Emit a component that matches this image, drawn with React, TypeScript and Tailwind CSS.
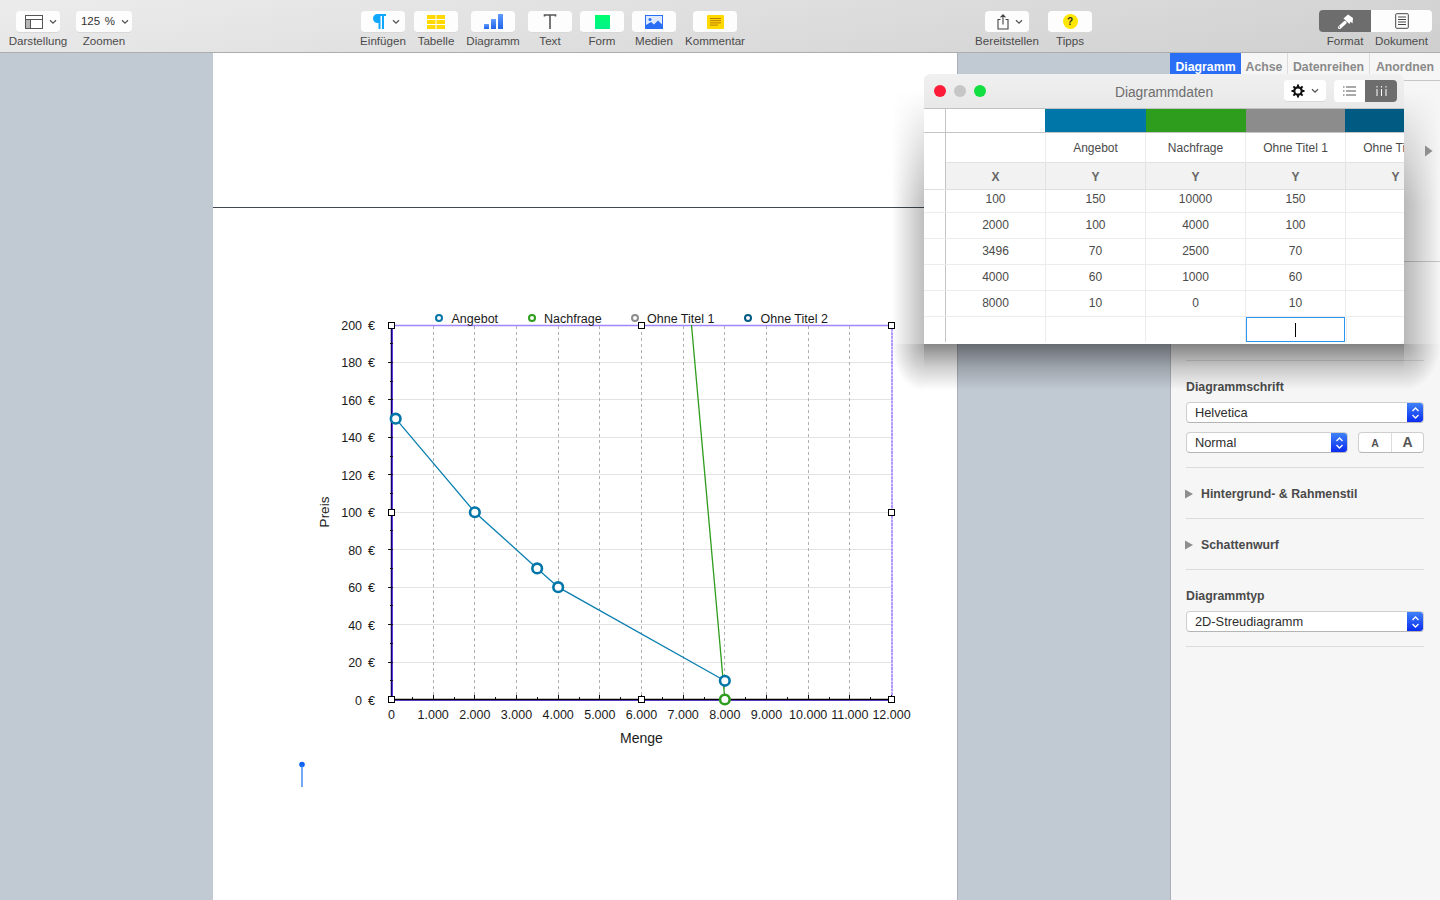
import type { ReactNode } from "react";

const FONT = "font-['Liberation_Sans',Arial,sans-serif]";

const Y_TICKS = [0, 20, 40, 60, 80, 100, 120, 140, 160, 180, 200];
const X_TICKS = [0, 1, 2, 3, 4, 5, 6, 7, 8, 9, 10, 11, 12];

const xAt = (v: number) => 391.5 + (v / 12000) * 500;
const yAt = (v: number) => 699.5 - (v / 200) * 374.5;
// keeps thin lines on whole pixels
const crisp = (n: number) => Math.floor(n) + 0.5;

const ANGEBOT: [number, number][] = [
  [100, 150],
  [2000, 100],
  [3496, 70],
  [4000, 60],
  [8000, 10],
];

const HANDLES: [number, number][] = [
  [391.5, 325.5],
  [641.5, 325.5],
  [891.5, 325.5],
  [391.5, 512.5],
  [891.5, 512.5],
  [391.5, 699.5],
  [641.5, 699.5],
  [891.5, 699.5],
];

const LEGEND = [
  { label: "Angebot", cx: 439, tx: 451.5, color: "#0076a8" },
  { label: "Nachfrage", cx: 532, tx: 544, color: "#2e9c1c" },
  { label: "Ohne Titel 1", cx: 635, tx: 647, color: "#8c8c8c" },
  { label: "Ohne Titel 2", cx: 748, tx: 760.5, color: "#005a82" },
];

const ROWS = [
  ["100", "150", "10000", "150"],
  ["2000", "100", "4000", "100"],
  ["3496", "70", "2500", "70"],
  ["4000", "60", "1000", "60"],
  ["8000", "10", "0", "10"],
];

function Chevron() {
  return (
    <svg width="8" height="6" viewBox="0 0 8 6" className="shrink-0">
      <path d="M1 1.2 4 4.2 7 1.2" fill="none" stroke="#555" strokeWidth="1.3" />
    </svg>
  );
}

function ToolItem({
  label,
  width,
  children,
}: {
  label: string;
  width: string;
  children: ReactNode;
}) {
  return (
    <div className={`flex shrink-0 flex-col items-center ${width}`}>
      {children}
      <span className="mt-[1px] text-[11.6px] leading-[14px] whitespace-nowrap text-[#4b4b4b]">{label}</span>
    </div>
  );
}

function ToolButton({ children, width = "w-[44px]", className = "" }: { children: ReactNode; width?: string; className?: string }) {
  return (
    <div
      className={`flex h-[22px] items-center justify-center gap-[6px] rounded-[4px] border-b border-[#d8d8d8] bg-[#fdfdfd] ${width} ${className}`}
    >
      {children}
    </div>
  );
}

function Toolbar() {
  return (
    <header className="flex h-[53px] shrink-0 border-b border-[#adadad] bg-[linear-gradient(170deg,#ececec,#cfcfcf)] pt-[11px]">
      <div className="ml-[8px] flex gap-[6px]">
        <ToolItem label="Darstellung" width="w-[60px]">
          <ToolButton className="pl-[6px]">
            <svg width="18" height="14" viewBox="0 0 18 14">
              <rect x="0.5" y="0.5" width="17" height="13" fill="#fff" stroke="#555" />
              <rect x="1" y="5" width="4.5" height="8" fill="#b5b5b5" />
              <path d="M0.5 4.5h17M5.5 4.5v9" stroke="#555" fill="none" />
            </svg>
            <Chevron />
          </ToolButton>
        </ToolItem>
        <ToolItem label="Zoomen" width="w-[60px]">
          <ToolButton width="w-[56px]" className="pl-[2px]">
            <span className="text-[11.5px] [word-spacing:1.5px] text-[#333]">125 %</span>
            <Chevron />
          </ToolButton>
        </ToolItem>
      </div>

      <div className="ml-[226px] flex gap-[7px]">
        <ToolItem label="Einfügen" width="w-[46px]">
          <ToolButton className="pl-[6px]">
            <svg width="14" height="15" viewBox="0 0 14 15">
              <path d="M5.500 0H14V2H12V15H10V2H8.500V15H6.500V9H5.500A4.500 4.500 0 0 1 5.500 0Z" fill="#10a8ff" />
            </svg>
            <Chevron />
          </ToolButton>
        </ToolItem>
        <ToolItem label="Tabelle" width="w-[46px]">
          <ToolButton>
            <svg width="18" height="14" viewBox="0 0 18 14">
              <rect width="18" height="14" fill="#ffd900" />
              <path d="M0 4.500h18M0 9.500h18M9 0v14" stroke="#fff" strokeWidth="1" />
            </svg>
          </ToolButton>
        </ToolItem>
        <ToolItem label="Diagramm" width="w-[54px]">
          <ToolButton>
            <svg width="19" height="15" viewBox="0 0 19 15">
              <defs>
                <linearGradient id="barFill" x1="0" y1="0" x2="0" y2="1">
                  <stop offset="0" stopColor="#5f9bff" />
                  <stop offset="1" stopColor="#1f62e8" />
                </linearGradient>
              </defs>
              <rect x="0" y="10" width="5" height="5" rx="0.6" fill="url(#barFill)" />
              <rect x="7" y="5" width="5" height="10" rx="0.6" fill="url(#barFill)" />
              <rect x="14" y="0" width="5" height="15" rx="0.6" fill="url(#barFill)" />
            </svg>
          </ToolButton>
        </ToolItem>
        <div className="ml-[1px] flex gap-[8px]">
          <ToolItem label="Text" width="w-[44px]">
            <ToolButton>
              <svg width="14" height="15" viewBox="0 0 14 15">
                <path d="M1.500 2.500V1h11v1.500M7 1v14" fill="none" stroke="#555" strokeWidth="1.600" />
              </svg>
            </ToolButton>
          </ToolItem>
          <ToolItem label="Form" width="w-[44px]">
            <ToolButton>
              <span className="h-[14px] w-[15px] bg-[linear-gradient(#00ff6e,#00f08a)]" />
            </ToolButton>
          </ToolItem>
          <ToolItem label="Medien" width="w-[44px]">
            <ToolButton>
              <svg width="18" height="14" viewBox="0 0 18 14">
                <rect x="0.500" y="0.500" width="17" height="13" fill="#dfeaff" stroke="#2a6ef5" />
                <circle cx="5" cy="4.500" r="1.500" fill="#2a6ef5" />
                <path d="M1 13V10L6 7 9 9.500 13 5.500 17 9.500V13Z" fill="#2a6ef5" />
              </svg>
            </ToolButton>
          </ToolItem>
          <ToolItem label="Kommentar" width="w-[62px]">
            <ToolButton>
              <svg width="17" height="14" viewBox="0 0 17 14">
                <rect width="17" height="14" rx="1" fill="#ffd900" />
                <path d="M3 3.500h11M3 5.700h11M3 7.900h11M3 10.100h8" stroke="#b5720a" strokeWidth="0.900" />
              </svg>
            </ToolButton>
          </ToolItem>
        </div>
      </div>

      <div className="ml-[228px] flex gap-[8px]">
        <ToolItem label="Bereitstellen" width="w-[66px]">
          <ToolButton className="pl-[6px]">
            <svg width="12" height="16" viewBox="0 0 12 16">
              <path
                d="M3.500 5.500H1V15H11V5.500H8.500M6 10.500V1M3.500 3.300 6 0.800 8.500 3.300"
                fill="none"
                stroke="#444"
                strokeWidth="1.100"
              />
            </svg>
            <Chevron />
          </ToolButton>
        </ToolItem>
        <ToolItem label="Tipps" width="w-[44px]">
          <ToolButton>
            <span className="flex h-[15px] w-[15px] items-center justify-center rounded-full bg-[#ffe600] text-[10px] font-bold text-[#333]">
              ?
            </span>
          </ToolButton>
        </ToolItem>
      </div>

      <div className="-mt-[1px] ml-auto mr-[8px] flex w-[113px] flex-col">
        <div className="flex h-[22px] overflow-hidden rounded-[4px]">
          <div className="flex w-[52px] items-center justify-center bg-[#6d6d6d]">
            <svg width="17" height="15" viewBox="0 0 17 15">
              <path d="M6.500 4.500 11 0.500 16 4 15.500 9.500 13.500 7.500 12.500 10 Z" fill="#fff" />
              <path d="M8 8.500 2.500 13.500" stroke="#fff" strokeWidth="3.200" strokeLinecap="round" />
              <circle cx="2.300" cy="13" r="0.700" fill="#6d6d6d" />
            </svg>
          </div>
          <div className="flex flex-1 items-center justify-center bg-[#fdfdfd]">
            <svg width="14" height="16" viewBox="0 0 14 16">
              <rect x="0.700" y="0.700" width="12.600" height="14.600" rx="1" fill="#fff" stroke="#444" />
              <path d="M3 4h8M3 6.500h8M3 9h8M3 11.500h8" stroke="#444" />
            </svg>
          </div>
        </div>
        <div className="mt-[2px] flex">
          <span className="w-[52px] text-center text-[11.6px] leading-[14px] text-[#4b4b4b]">Format</span>
          <span className="w-[61px] text-center text-[11.6px] leading-[14px] text-[#4b4b4b]">Dokument</span>
        </div>
      </div>
    </header>
  );
}

function Chart() {
  return (
    <svg
      width="744"
      height="639"
      viewBox="213 208 744 639"
      className="block font-['Liberation_Sans',Arial,sans-serif]"
    >
      {Y_TICKS.slice(1, -1).map((v) => (
        <line key={v} x1="392" x2="891" y1={crisp(yAt(v))} y2={crisp(yAt(v))} stroke="#e3e3e3" />
      ))}
      {X_TICKS.slice(1, -1).map((v) => (
        <line
          key={v}
          x1={crisp(xAt(v * 1000))}
          x2={crisp(xAt(v * 1000))}
          y1="326"
          y2="699"
          stroke="#b0b0b0"
          strokeDasharray="3 3"
        />
      ))}
      <line x1="392" x2="892" y1="325.500" y2="325.500" stroke="#a184ff" strokeWidth="1.300" />
      <line x1="892" x2="892" y1="325" y2="700" stroke="#9a78ff" strokeWidth="1.500" strokeDasharray="3 0.600" />
      <line x1="392.500" x2="392.500" y1="325" y2="700" stroke="#7a4dff" strokeWidth="1" />
      <line x1="391.500" x2="891.500" y1="700.500" y2="700.500" stroke="#7a4dff" strokeWidth="1" />
      <line x1="391.500" x2="391.500" y1="325" y2="700" stroke="#10006a" strokeWidth="1.500" />
      <line x1="391.500" x2="891.500" y1="699.500" y2="699.500" stroke="#000" strokeWidth="1.300" />

      {Array.from({ length: 20 }, (_, i) => (i + 1) * 10).map((v) => (
        <line
          key={v}
          x1={v % 20 === 0 ? 388 : 390}
          x2="393"
          y1={crisp(yAt(v))}
          y2={crisp(yAt(v))}
          stroke="#111"
        />
      ))}
      {Array.from({ length: 24 }, (_, i) => (i + 1) * 500).map((v) => (
        <line
          key={v}
          x1={crisp(xAt(v))}
          x2={crisp(xAt(v))}
          y1={v % 1000 === 0 ? 695 : 697}
          y2="699"
          stroke="#111"
        />
      ))}

      {Y_TICKS.map((v) => (
        <text key={v} x="375" y={yAt(v) + 5} textAnchor="end" fontSize="12.500" wordSpacing="2.500" fill="#1a1a1a">
          {v} €
        </text>
      ))}
      {X_TICKS.map((v) => (
        <text key={v} x={xAt(v * 1000)} y="719" textAnchor="middle" fontSize="12.500" fill="#1a1a1a">
          {v === 0 ? "0" : `${v}.000`}
        </text>
      ))}
      <text x="641.500" y="743" textAnchor="middle" fontSize="14" fill="#1a1a1a">
        Menge
      </text>
      <text transform="translate(329 512) rotate(-90)" textAnchor="middle" fontSize="13.500" fill="#1a1a1a">
        Preis
      </text>

      {LEGEND.map((item) => (
        <g key={item.label}>
          <circle cx={item.cx} cy="318" r="3" fill="#fff" stroke={item.color} strokeWidth="2" />
          <text x={item.tx} y="323" fontSize="12.500" fill="#1a1a1a">
            {item.label}
          </text>
        </g>
      ))}

      <line x1="691.500" y1="325" x2={xAt(8000)} y2={yAt(0)} stroke="#2e9c1c" strokeWidth="1.300" />
      <polyline
        points={ANGEBOT.map(([x, y]) => `${xAt(x)},${yAt(y)}`).join(" ")}
        fill="none"
        stroke="#0a7fb0"
        strokeWidth="1.300"
      />
      {ANGEBOT.map(([x, y]) => (
        <circle key={x} cx={xAt(x)} cy={yAt(y)} r="4.800" fill="#fff" stroke="#0076a8" strokeWidth="2.600" />
      ))}
      <circle cx={xAt(8000)} cy={yAt(0)} r="4.800" fill="#fff" stroke="#2e9c1c" strokeWidth="2.600" />

      {HANDLES.map(([x, y]) => (
        <rect key={`${x}-${y}`} x={x - 3} y={y - 3} width="6" height="6" fill="#fff" stroke="#000" />
      ))}

      <circle cx="302" cy="764.500" r="2.800" fill="#0a62f0" />
      <line x1="302" x2="302" y1="765" y2="787" stroke="#2a7cf5" strokeWidth="1.300" />
    </svg>
  );
}

function PopUp({ label, width }: { label: string; width: string }) {
  return (
    <div
      className={`flex h-[21px] items-center overflow-hidden rounded-[4px] border border-[#cfcfcf] border-b-[#b5b5b5] bg-white ${width}`}
    >
      <span className="flex-1 pl-[8px] text-[12.800px] text-[#2e2e2e]">{label}</span>
      <span className="flex h-full w-[16px] items-center justify-center bg-[linear-gradient(#3f82f8,#0a2cf0)]">
        <svg width="9" height="14" viewBox="0 0 9 14">
          <path d="M1.500 5 4.500 2 7.500 5M1.500 9 4.500 12 7.500 9" fill="none" stroke="#fff" strokeWidth="1.300" />
        </svg>
      </span>
    </div>
  );
}

function Disclosure({ label }: { label: string }) {
  return (
    <div className="flex h-[51px] items-center border-b border-[#dcdcdc] pt-[2px]">
      <svg width="8" height="10" viewBox="0 0 8 10" className="-ml-[1px]">
        <path d="M0 0.500 8 5 0 9.500Z" fill="#8e8e8e" />
      </svg>
      <span className="ml-[8px] text-[12.300px] font-bold text-[#4a4a4a]">{label}</span>
    </div>
  );
}

function Sidebar() {
  return (
    <aside className="flex w-[270px] shrink-0 flex-col border-l border-[#aab0b7] bg-[#f6f6f6]">
      <nav className="-ml-px flex h-[28px] border-b border-[#c6c6c6] text-[12.300px] font-bold text-[#8a8a8a]">
        <span className="flex w-[71px] items-end justify-center bg-[#2a6ef5] pb-[2px] leading-[22px] text-white">
          Diagramm
        </span>
        <span className="flex w-[47px] items-end justify-center border-r border-[#dcdcdc] pb-[2px] leading-[22px]">
          Achse
        </span>
        <span className="flex w-[82px] items-end justify-center border-r border-[#dcdcdc] pb-[2px] leading-[22px]">
          Datenreihen
        </span>
        <span className="flex flex-1 items-end justify-center pb-[2px] leading-[22px]">Anordnen</span>
      </nav>
      <div className="h-[181px] border-b border-[#c6c6c6]" />
      <div className="mr-[16px] ml-[15px] flex flex-col">
        <div className="h-[99px] border-b border-[#dcdcdc]" />
        <h3 className="mt-[19px] text-[12.300px] leading-[14px] font-bold text-[#4a4a4a]">Diagrammschrift</h3>
        <div className="mt-[8px] flex flex-col gap-[9px]">
          <PopUp label="Helvetica" width="w-[238px]" />
          <div className="flex justify-between">
            <PopUp label="Normal" width="w-[162px]" />
            <div className="flex h-[21px] w-[66px] rounded-[4px] border border-[#cfcfcf] border-b-[#b5b5b5] bg-white font-bold text-[#555]">
              <span className="flex w-[33px] items-center justify-center border-r border-[#dcdcdc] pt-[3px] text-[10.500px]">
                A
              </span>
              <span className="flex flex-1 items-center justify-center text-[14px]">A</span>
            </div>
          </div>
        </div>
        <div className="h-[15px] border-b border-[#dcdcdc]" />
        <Disclosure label="Hintergrund- & Rahmenstil" />
        <Disclosure label="Schattenwurf" />
        <h3 className="mt-[19px] text-[12.300px] leading-[14px] font-bold text-[#4a4a4a]">Diagrammtyp</h3>
        <div className="mt-[8px]">
          <PopUp label="2D-Streudiagramm" width="w-[238px]" />
        </div>
        <div className="h-[15px] border-b border-[#dcdcdc]" />
      </div>
    </aside>
  );
}

/** Window shadow as gradient strips round the window. */
function WindowShadow() {
  return (
    <>
      <div className="absolute top-[344px] left-[924px] h-[46px] w-[480px] bg-[linear-gradient(#00000078,#00000030_50%,#00000000)]" />
      <div className="absolute top-[90px] left-[892px] h-[254px] w-[32px] bg-[linear-gradient(to_left,#00000040,#00000000)] [mask-image:linear-gradient(#00000000,#000000_45%)]" />
      <div className="absolute top-[90px] left-[1404px] h-[254px] w-[36px] bg-[linear-gradient(to_right,#00000040,#00000000)] [mask-image:linear-gradient(#00000000,#000000_45%)]" />
      <div className="absolute top-[344px] left-[892px] h-[46px] w-[32px] bg-[radial-gradient(ellipse_at_top_right,#00000058,#00000000_72%)]" />
      <div className="absolute top-[344px] left-[1404px] h-[46px] w-[36px] bg-[radial-gradient(ellipse_at_top_left,#00000058,#00000000_72%)]" />
    </>
  );
}

function DataWindow() {
  const colBase = "w-[100px] shrink-0 border-r border-[#ececec] text-center";
  const gutter = "w-[22px] shrink-0 border-r border-[#c4c4c4]";
  return (
    <div className="absolute top-[74px] left-[924px] flex h-[270px] w-[480px] flex-col overflow-hidden rounded-[6px] bg-white">
      <div className="relative flex h-[35px] shrink-0 items-center border-b border-[#c2c2c2] bg-[linear-gradient(#f0f0f0,#e8e8e8)] pr-[7px] pl-[10px]">
        <div className="flex gap-[8px]">
          <span className="h-[12px] w-[12px] rounded-full bg-[#fc1c39]" />
          <span className="h-[12px] w-[12px] rounded-full bg-[#c6c6c6]" />
          <span className="h-[12px] w-[12px] rounded-full bg-[#12e042]" />
        </div>
        <span className="flex-1 pt-[5px] pl-[58px] text-center text-[13.800px] text-[#6e6e6e]">Diagrammdaten</span>
        <div className="flex gap-[8px]">
          <div className="flex h-[22px] w-[42px] items-center justify-center gap-[6px] rounded-[4px] border-b border-[#d8d8d8] bg-white">
            <svg width="14" height="14" viewBox="0 0 14 14">
              <circle cx="7" cy="7" r="3.700" fill="none" stroke="#111" strokeWidth="2.200" />
              <path
                d="M7 0.500v2.500M7 11v2.500M0.500 7H3M11 7h2.500M2.400 2.400l1.800 1.800M9.800 9.800l1.800 1.800M2.400 11.600l1.800-1.800M9.800 4.200l1.800-1.800"
                stroke="#111"
                strokeWidth="2"
              />
            </svg>
            <Chevron />
          </div>
          <div className="flex h-[22px] w-[63px] overflow-hidden rounded-[4px]">
            <div className="flex w-[31px] items-center justify-center bg-white">
              <svg width="13" height="10" viewBox="0 0 13 10">
                <path d="M0 1h1.500M3 1h10M0 5h1.500M3 5h10M0 9h1.500M3 9h10" stroke="#555" />
              </svg>
            </div>
            <div className="flex flex-1 items-center justify-center bg-[#6d6d6d]">
              <svg width="11" height="10" viewBox="0 0 11 10">
                <path d="M1 0v1.500M1 3v7M5.500 0v1.500M5.500 3v7M10 0v1.500M10 3v7" stroke="#fff" />
              </svg>
            </div>
          </div>
        </div>
      </div>

      <div className={`flex flex-1 flex-col overflow-hidden text-[12px] text-[#4a4a4a] ${FONT}`}>
        <div className="flex h-[24px] shrink-0 border-b border-[#c4c4c4]">
          <div className={gutter} />
          <div className="w-[99px] shrink-0" />
          <div className="w-[101px] shrink-0 bg-[#0076a8]" />
          <div className="w-[100px] shrink-0 bg-[#2e9c1c]" />
          <div className="w-[99px] shrink-0 bg-[#8c8c8c]" />
          <div className="w-[59px] shrink-0 bg-[#005a82]" />
        </div>
        <div className="flex h-[30px] shrink-0">
          <div className={gutter} />
          {["", "Angebot", "Nachfrage", "Ohne Titel 1", "Ohne Titel 2"].map((label) => (
            <div key={label} className={`${colBase} border-b border-b-[#e2e2e2] leading-[31px] whitespace-nowrap`}>
              {label}
            </div>
          ))}
        </div>
        <div className="flex h-[27px] shrink-0 border-b border-[#dedede]">
          <div className={gutter} />
          {["X", "Y", "Y", "Y", "Y"].map((label, i) => (
            <div key={i} className={`${colBase} border-r-[#e2e2e2] bg-[#f2f2f2] leading-[28px] font-bold text-[#666]`}>
              {label}
            </div>
          ))}
        </div>
        {ROWS.map((row, r) => (
          <div key={row[0]} className={`flex shrink-0 border-b border-[#ececec] ${r === 0 ? "h-[23px]" : "h-[26px]"}`}>
            <div className={gutter} />
            {[...row, ""].map((cell, i) => (
              <div key={i} className={`${colBase} ${r === 0 ? "leading-[19px]" : "leading-[25px]"}`}>
                {cell}
              </div>
            ))}
          </div>
        ))}
        <div className="flex flex-1 pb-[2px]">
          <div className={gutter} />
          <div className={colBase} />
          <div className={colBase} />
          <div className={colBase} />
          <div className="flex w-[99px] shrink-0 items-center justify-center border border-[#2a96f0]">
            <span className="h-[14px] w-px bg-black" />
          </div>
          <div className="ml-px w-[100px] shrink-0 border-l border-[#ececec]" />
        </div>
      </div>
    </div>
  );
}

export default function App() {
  return (
    <div className={`relative flex h-[900px] w-[1440px] flex-col overflow-hidden bg-[#c1c9d3] ${FONT}`}>
      <Toolbar />
      <main className="flex min-h-0 flex-1">
        <div className="w-[213px] shrink-0" />
        <div className="w-[745px] shrink-0 border-r border-[#aab0b7] bg-white">
          <div className="h-[155px] border-b border-[#3f4a55]" />
          <Chart />
        </div>
        <div className="w-[212px] shrink-0" />
        <Sidebar />
      </main>
      <WindowShadow />
      <DataWindow />
      <svg width="8" height="12" viewBox="0 0 8 12" className="absolute top-[145px] left-[1425px]">
        <path d="M0 0.500 7.500 6 0 11.500Z" fill="#8e8e8e" />
      </svg>
    </div>
  );
}
